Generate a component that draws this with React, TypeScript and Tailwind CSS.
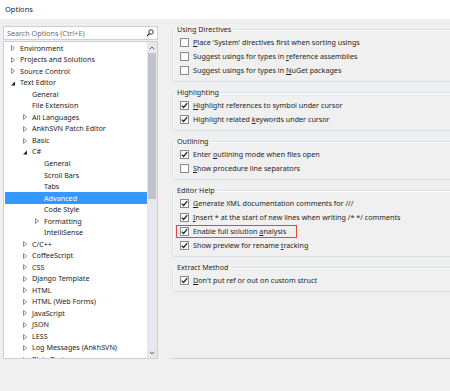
import type { ReactNode } from 'react';

type Node = { label: string; level: number; kind: 'closed' | 'open' | 'leaf'; selected?: boolean };

const TREE: Node[] = [
  { label: 'Environment', level: 0, kind: 'closed' },
  { label: 'Projects and Solutions', level: 0, kind: 'closed' },
  { label: 'Source Control', level: 0, kind: 'closed' },
  { label: 'Text Editor', level: 0, kind: 'open' },
  { label: 'General', level: 1, kind: 'leaf' },
  { label: 'File Extension', level: 1, kind: 'leaf' },
  { label: 'All Languages', level: 1, kind: 'closed' },
  { label: 'AnkhSVN Patch Editor', level: 1, kind: 'closed' },
  { label: 'Basic', level: 1, kind: 'closed' },
  { label: 'C#', level: 1, kind: 'open' },
  { label: 'General', level: 2, kind: 'leaf' },
  { label: 'Scroll Bars', level: 2, kind: 'leaf' },
  { label: 'Tabs', level: 2, kind: 'leaf' },
  { label: 'Advanced', level: 2, kind: 'leaf', selected: true },
  { label: 'Code Style', level: 2, kind: 'leaf' },
  { label: 'Formatting', level: 2, kind: 'closed' },
  { label: 'IntelliSense', level: 2, kind: 'leaf' },
  { label: 'C/C++', level: 1, kind: 'closed' },
  { label: 'CoffeeScript', level: 1, kind: 'closed' },
  { label: 'CSS', level: 1, kind: 'closed' },
  { label: 'Django Template', level: 1, kind: 'closed' },
  { label: 'HTML', level: 1, kind: 'closed' },
  { label: 'HTML (Web Forms)', level: 1, kind: 'closed' },
  { label: 'JavaScript', level: 1, kind: 'closed' },
  { label: 'JSON', level: 1, kind: 'closed' },
  { label: 'LESS', level: 1, kind: 'closed' },
  { label: 'Log Messages (AnkhSVN)', level: 1, kind: 'closed' },
  { label: 'Plain Text', level: 1, kind: 'closed' },
];

function Arrow({ kind }: { kind: Node['kind'] }) {
  if (kind === 'leaf') return <span className="w-[12px] shrink-0" />;
  if (kind === 'open')
    return (
      <svg width="12" height="8" viewBox="0 0 12 8" className="shrink-0">
        <path d="M3 6.5 L7 6.5 L7 2.5 Z" fill="#1e1e1e" />
      </svg>
    );
  return (
    <svg width="12" height="8" viewBox="0 0 12 8" className="shrink-0">
      <path d="M3.5 1.5 L6.5 4 L3.5 6.5 Z" fill="none" stroke="#818181" strokeWidth="0.9" />
    </svg>
  );
}

function TreeRow({ node }: { node: Node }) {
  return (
    <div
      className={`h-[11.54px] flex items-center pr-[2px] ${node.selected ? 'bg-[#3399ff] text-white' : ''}`}
      style={{ paddingLeft: 3 + node.level * 12 }}
    >
      <Arrow kind={node.kind} />
      <span className="whitespace-nowrap leading-none">{node.label}</span>
    </div>
  );
}

function Check({ on }: { on?: boolean }) {
  return (
    <span className="w-[9px] h-[9px] border border-[#8a8a8a] bg-white shrink-0 flex items-center justify-center">
      {on && (
        <svg width="7" height="7" viewBox="0 0 7 7">
          <path d="M0.8 3.6 L2.6 5.5 L6.2 1.2" fill="none" stroke="#1e1e1e" strokeWidth="1.3" />
        </svg>
      )}
    </span>
  );
}

function Option({ on, children, marked }: { on?: boolean; children: ReactNode; marked?: boolean }) {
  return (
    <div className="relative h-[14px] flex items-center gap-[4px] pl-[7px]">
      <Check on={on} />
      <span className="whitespace-nowrap">{children}</span>
      {marked && <span className="absolute left-[3px] top-[1px] w-[121px] h-[13px] border border-[#e0483e]" />}
    </div>
  );
}

function Group({ title, children }: { title: string; children: ReactNode }) {
  return (
    <fieldset className="border border-[#d5dfe5] rounded-[3px] shadow-[inset_1px_1px_0_#ffffff] pt-[1px] pb-[4px] mt-[5px] first:mt-0 -mr-[10px]">
      <legend className="ml-[2px] px-[2px] h-[10px] leading-[10px] text-[#1e1e1e]">{title}</legend>
      {children}
    </fieldset>
  );
}

function U({ children }: { children: ReactNode }) {
  return <span className="underline underline-offset-[1px]">{children}</span>;
}

export default function App() {
  return (
    <div className="w-[450px] h-[391px] bg-[#f0f0f0] flex flex-col overflow-hidden font-['Noto_Sans',sans-serif] text-[7.2px] text-[#1e1e1e]">
      <div className="h-[19px] bg-white pl-[5px] flex items-center shrink-0 text-[7.5px]">Options</div>
      <div className="flex flex-1 min-h-0">
        <div className="w-[160px] pl-[3px] pr-[2px] pt-[7px] flex flex-col">
          <div className="h-[14px] border border-[#cccedb] bg-white flex items-center pl-[3px] pr-[3px]">
            <span className="flex-1 text-[#6d6d6d] whitespace-nowrap">Search Options (Ctrl+E)</span>
            <svg width="8" height="8" viewBox="0 0 8 8">
              <circle cx="5" cy="3" r="2.2" fill="none" stroke="#1e1e1e" strokeWidth="0.9" />
              <path d="M3.4 4.6 L1 7" stroke="#1e1e1e" strokeWidth="1.1" />
            </svg>
          </div>
          <div className="h-[318px] mt-[1px] border border-[#cccedb] bg-white flex overflow-hidden">
            <div className="flex-1 pt-[0.5px] pl-[1px] overflow-hidden">
              {TREE.map((n, i) => (
                <TreeRow key={i} node={n} />
              ))}
            </div>
            <div className="w-[10px] bg-[#e8e8ec] flex flex-col items-center">
              <div className="h-[11px] flex items-center">
                <svg width="6" height="4" viewBox="0 0 6 4">
                  <path d="M0.8 3.2 L3 1 L5.2 3.2" fill="none" stroke="#4d4d4d" strokeWidth="0.9" />
                </svg>
              </div>
              <div className="w-[8px] h-[146px] bg-[#c2c3c9]" />
              <div className="flex-1" />
              <div className="h-[11px] flex items-center">
                <svg width="6" height="4" viewBox="0 0 6 4">
                  <path d="M0.8 0.8 L3 3 L5.2 0.8" fill="none" stroke="#4d4d4d" strokeWidth="0.9" />
                </svg>
              </div>
            </div>
          </div>
        </div>
        <div className="flex-1 pl-[12px] pt-[5px] flex flex-col">
          <Group title="Using Directives">
            <Option><U>P</U>lace 'System' directives first when sorting usings</Option>
            <Option>Suggest usings for types in <U>r</U>eference assemblies</Option>
            <Option>Suggest usings for types in <U>N</U>uGet packages</Option>
          </Group>
          <Group title="Highlighting">
            <Option on><U>H</U>ighlight references to symbol under cursor</Option>
            <Option on>Highlight related <U>k</U>eywords under cursor</Option>
          </Group>
          <Group title="Outlining">
            <Option on>Enter <U>o</U>utlining mode when files open</Option>
            <Option><U>S</U>how procedure line separators</Option>
          </Group>
          <Group title="Editor Help">
            <Option on><U>G</U>enerate XML documentation comments for ///</Option>
            <Option on><U>I</U>nsert * at the start of new lines when writing /* */ comments</Option>
            <Option on marked>Enable full solution <U>a</U>nalysis</Option>
            <Option on>Show preview for rename <U>t</U>racking</Option>
          </Group>
          <Group title="Extract Method">
            <Option on><U>D</U>on't put ref or out on custom struct</Option>
          </Group>
          <div className="flex-1" />
          <div className="border-t border-[#cfcfcf] h-[33px] -ml-[1px]" />
        </div>
      </div>
    </div>
  );
}
